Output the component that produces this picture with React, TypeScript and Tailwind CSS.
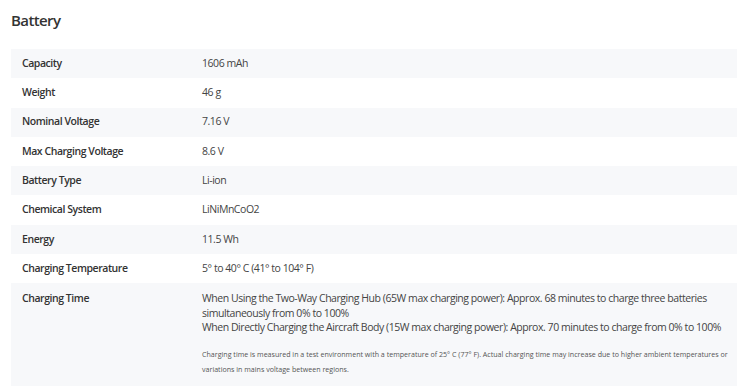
export default function App() {
  const rows: [string, string][] = [
    ["Capacity", "1606 mAh"],
    ["Weight", "46 g"],
    ["Nominal Voltage", "7.16 V"],
    ["Max Charging Voltage", "8.6 V"],
    ["Battery Type", "Li-ion"],
    ["Chemical System", "LiNiMnCoO2"],
    ["Energy", "11.5 Wh"],
    ["Charging Temperature", "5° to 40° C (41° to 104° F)"],
  ];
  return (
    <div className="w-[740px] h-[386px] bg-white overflow-hidden pl-[11px] pr-[3px] font-['Open_Sans',sans-serif]">
      <h2 className="text-[15px] tracking-[-0.6px] font-semibold text-[#333] leading-[20px] pt-[10px] h-[49px]">Battery</h2>
      <div className="flex flex-col">
        {rows.map(([k, v], i) => (
          <div
            key={k}
            className={`flex h-[29.3px] items-center text-[10.5px] ${i % 2 === 0 ? "bg-[#f7f8fa]" : "bg-white"}`}
          >
            <div className="w-[191px] pl-[11px] font-semibold text-[#333] tracking-[-0.45px]">{k}</div>
            <div className="text-[#444] tracking-[-0.45px]">{v}</div>
          </div>
        ))}
        <div className="flex bg-[#f7f8fa] pt-[8px] pb-[14px] text-[10.5px]">
          <div className="w-[191px] shrink-0 pl-[11px] font-semibold text-[#333] tracking-[-0.45px] leading-[14.5px]">Charging Time</div>
          <div className="flex-1 min-w-0">
            <div className="text-[#444] tracking-[-0.45px] leading-[14.5px] whitespace-nowrap">
              <p>When Using the Two-Way Charging Hub (65W max charging power): Approx. 68 minutes to charge three batteries</p>
              <p>simultaneously from 0% to 100%</p>
              <p>When Directly Charging the Aircraft Body (15W max charging power): Approx. 70 minutes to charge from 0% to 100%</p>
            </div>
            <div className="mt-[12px] text-[7.1px] leading-[15px] text-[#555] whitespace-nowrap">
              <p>Charging time is measured in a test environment with a temperature of 25° C (77° F). Actual charging time may increase due to higher ambient temperatures or</p>
              <p>variations in mains voltage between regions.</p>
            </div>
          </div>
        </div>
      </div>
    </div>
  );
}
